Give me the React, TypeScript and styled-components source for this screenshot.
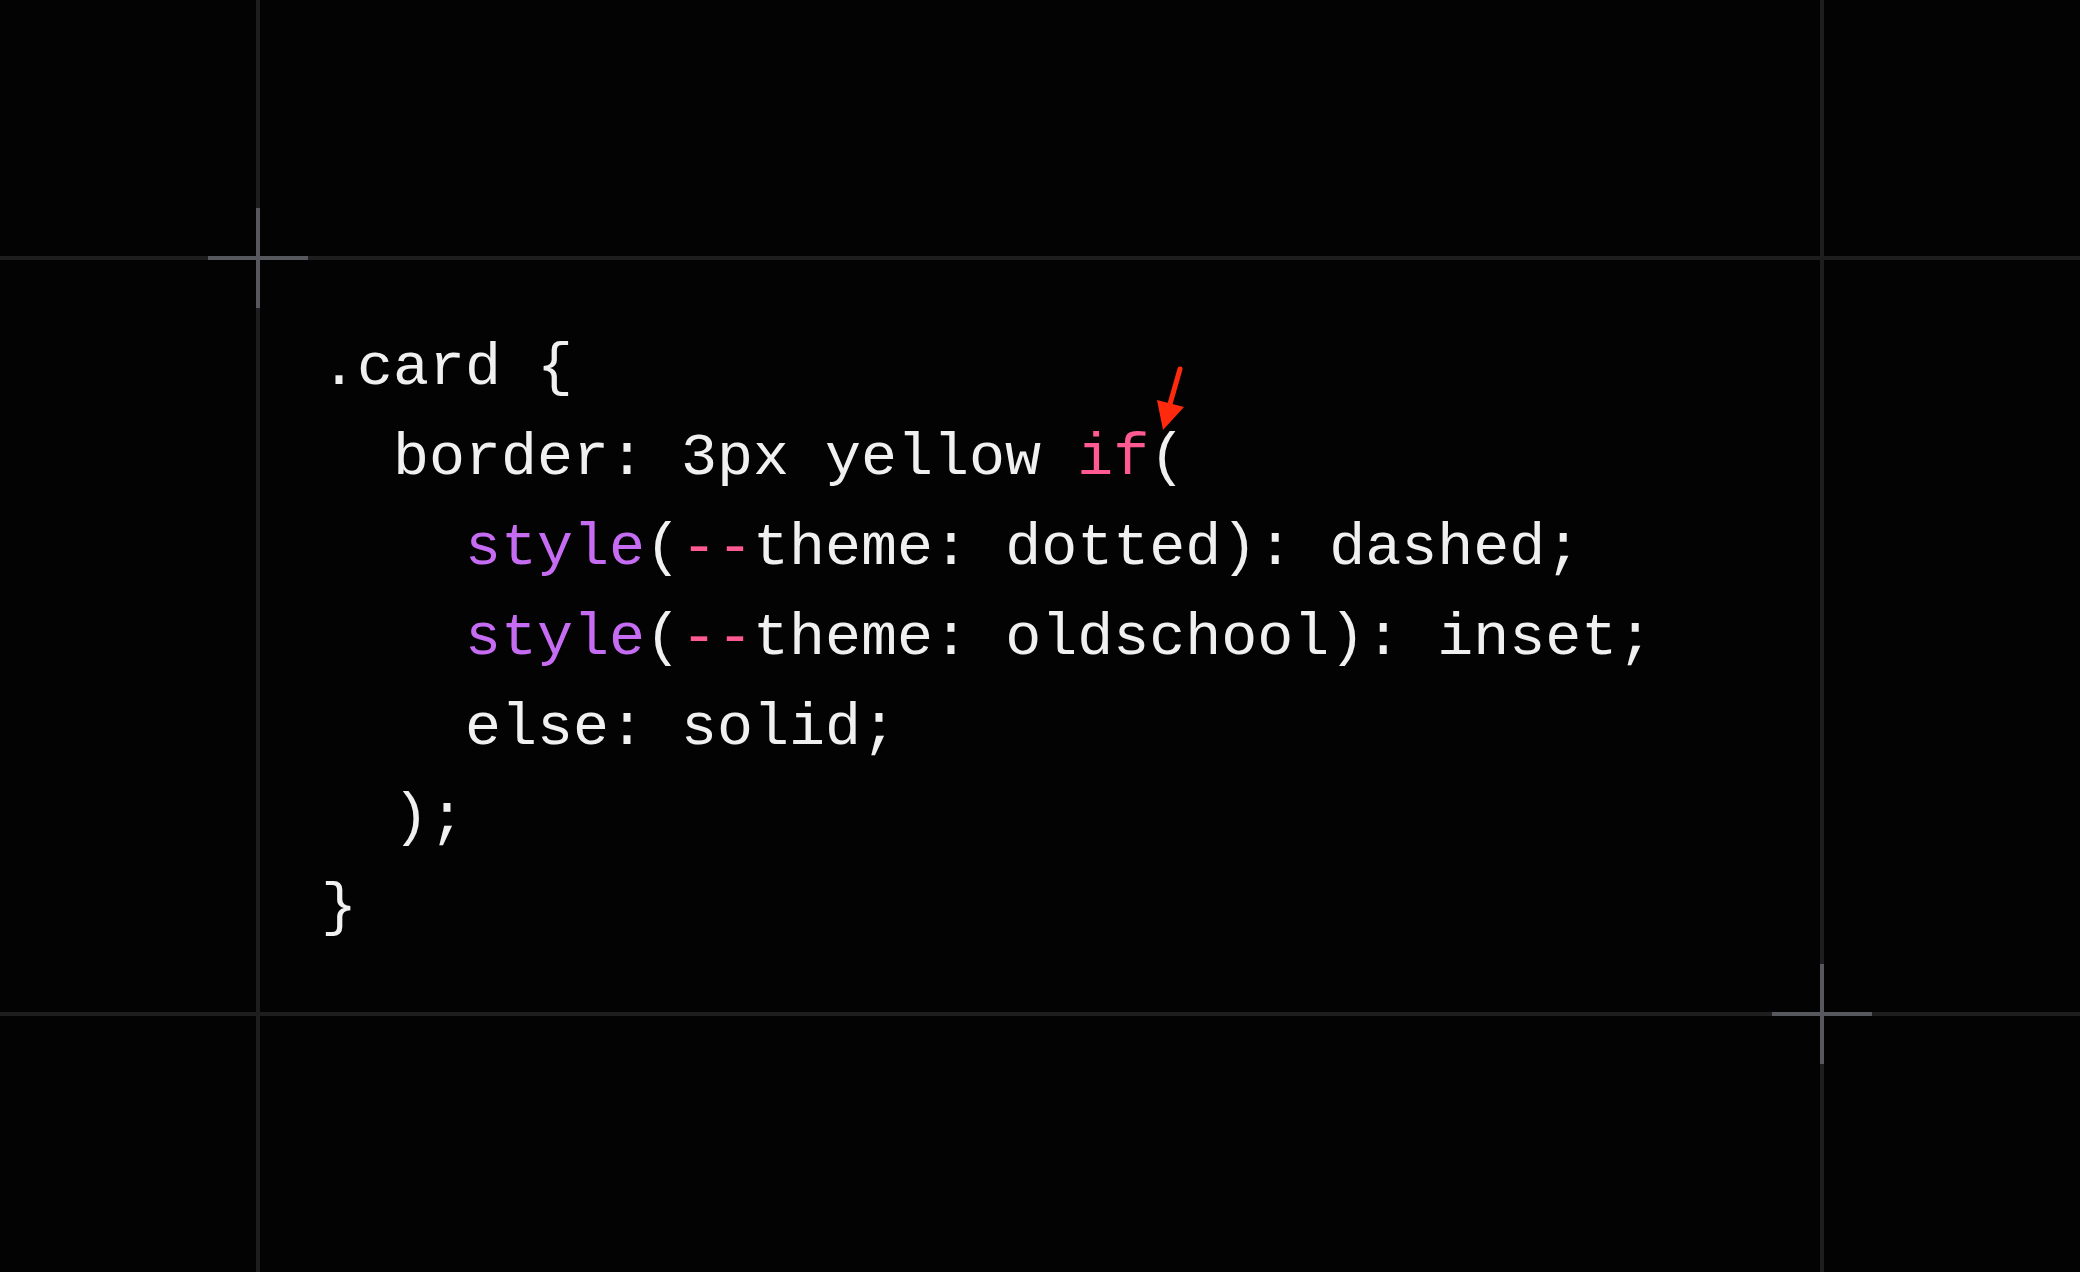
import React from "react";
import styled, { createGlobalStyle } from "styled-components";

const Global = createGlobalStyle`
  html, body { margin: 0; padding: 0; background: #030303; }
  body { width: 2080px; height: 1272px; overflow: hidden; }
`;

const Stage = styled.div`
  position: relative;
  width: 2080px;
  height: 1272px;
  background: #030303;
  display: grid;
  grid-template-columns: 256px 4px 1560px 4px 1fr;
  grid-template-rows: 256px 4px 752px 4px 1fr;
`;

const HLine = styled.div<{ $row: number }>`
  grid-row: ${(p) => p.$row};
  grid-column: 1 / -1;
  background: #1e1e1e;
`;

const VLine = styled.div<{ $col: number }>`
  grid-column: ${(p) => p.$col};
  grid-row: 1 / -1;
  background: #1e1e1e;
`;

const Cross = styled.div<{ $x: number; $y: number }>`
  position: absolute;
  left: ${(p) => p.$x - 50}px;
  top: ${(p) => p.$y - 50}px;
  width: 100px;
  height: 100px;
  z-index: 2;
  &::before,
  &::after {
    content: "";
    position: absolute;
    background: #56585d;
  }
  &::before {
    left: 0;
    top: 48px;
    width: 100px;
    height: 4px;
  }
  &::after {
    top: 0;
    left: 48px;
    width: 4px;
    height: 100px;
  }
`;

const Content = styled.div`
  grid-row: 3;
  grid-column: 3;
  padding: 63px 0 0 61px;
  z-index: 1;
`;

const Code = styled.pre`
  margin: 0;
  font-family: "Liberation Mono", "DejaVu Sans Mono", monospace;
  font-size: 60px;
  line-height: 90px;
  color: #f0f0f0;
  white-space: pre;
`;

const Fn = styled.span`
  color: #c56cf3;
`;

const Kw = styled.span`
  color: #ff5a92;
`;

const Marked = styled.span`
  position: relative;
`;

const Arrow = styled.svg`
  position: absolute;
  left: 1px;
  top: -62px;
  width: 40px;
  height: 72px;
  overflow: visible;
`;

export default function App() {
  return (
    <>
      <Global />
      <Stage>
        <HLine $row={2} />
        <HLine $row={4} />
        <VLine $col={2} />
        <VLine $col={4} />
        <Cross $x={258} $y={258} />
        <Cross $x={1822} $y={1014} />
        <Content>
          <Code>
            {".card {\n"}
            {"  border: 3px yellow "}
            <Kw>if</Kw>
            <Marked>
              (
              <Arrow viewBox="0 0 40 72">
                <line x1="30" y1="7" x2="20" y2="42" stroke="#ff2a0d" strokeWidth="5" strokeLinecap="round" />
                <polygon points="7,38 34,45 13,68" fill="#ff2a0d" />
              </Arrow>
            </Marked>
            {"\n    "}
            <Fn>style</Fn>
            {"("}
            <Kw>--</Kw>
            {"theme: dotted): dashed;\n    "}
            <Fn>style</Fn>
            {"("}
            <Kw>--</Kw>
            {"theme: oldschool): inset;\n"}
            {"    else: solid;\n"}
            {"  );\n"}
            {"}"}
          </Code>
        </Content>
      </Stage>
    </>
  );
}
